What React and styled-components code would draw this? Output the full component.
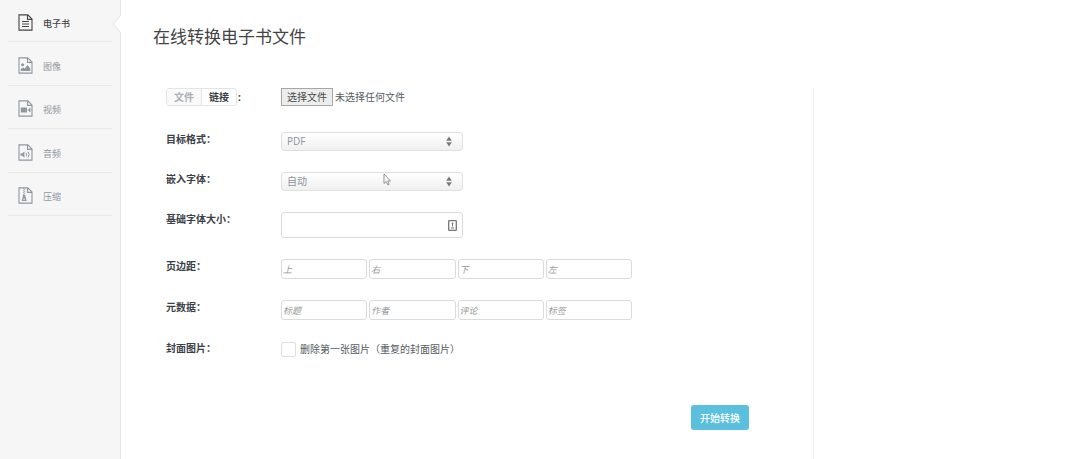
import React, { useRef, useState } from 'react'
import styled, { createGlobalStyle } from 'styled-components'

const GlobalStyle = createGlobalStyle`
    * {
        box-sizing: border-box;
    }
    body {
        margin: 0;
        background-color: #fff;
        color: #555b63;
        font-family: "Open Sans", "Noto Sans CJK SC", sans-serif;
        font-size: 10px;
        line-height: 16px;
    }
    button, input, select {
        margin: 0;
        font: inherit;
        color: inherit;
    }
`

const Page = styled.div`
    display: flex;
    min-height: 100vh;
`

const Sidebar = styled.nav`
    flex: 0 0 121px;
    padding: 0 8px;
    border-right: 1px solid #e6e6e6;
    background-color: #f6f6f6;
`

const Menu = styled.ul`
    margin: 0;
    padding: 0;
    list-style: none;
`

const MenuItem = styled.li`
    position: relative;
    border-bottom: 1px solid #e8e8e8;
`

const MenuLink = styled.a`
    display: flex;
    align-items: center;
    gap: 10px;
    height: 42px;
    padding: 3px 0 0 10px;
    color: ${(props) => (props.$active ? '#444' : '#9097a1')};
    font-size: 9px;
    font-weight: ${(props) => (props.$active ? 500 : 400)};
    text-decoration: none;

    ${MenuItem}:first-child & {
        height: 41px;
    }
    ${MenuItem}:nth-child(even) & {
        height: 43px;
    }
`

const MenuText = styled.span`
    padding-top: 3px;
`

// arrow on the sidebar edge that points at the current item
const Notch = styled.svg`
    position: absolute;
    top: 15px;
    right: -9px;
    width: 9px;
    height: 18px;
`

const Main = styled.main`
    flex: 1;
    display: flex;
    flex-direction: column;
`

const Title = styled.h1`
    margin: 25px 32px 39px;
    color: #444;
    font-size: 17px;
    font-weight: 400;
    line-height: 24px;
`

const Columns = styled.div`
    flex: 1;
    display: grid;
    grid-template-columns: 34fr 13fr;
`

const Form = styled.form`
    display: flex;
    flex-direction: column;
    gap: 21px;
    padding: 0 64px 24px 45px;
    border-right: 1px solid #ececec;
`

const Row = styled.div`
    display: grid;
    grid-template-columns: 115px 1fr;
    align-items: start;
    margin-bottom: ${(props) => (props.$spaced ? '5px' : '0')};
`

const Label = styled.label`
    color: #3b4047;
    font-weight: 700;
    line-height: 14px;
`

const Source = styled.div`
    display: flex;
    align-items: center;
    gap: 1px;
    color: #3b4047;
    font-weight: 700;
`

const Tabs = styled.div`
    display: flex;
    height: 18px;
    border: 1px solid #e2e4e6;
    border-radius: 3px;
    overflow: hidden;
`

const Tab = styled.button`
    padding: 0 7px;
    border: 0;
    border-left: ${(props) => (props.$active ? '0' : '1px solid #e2e4e6')};
    background: ${(props) => (props.$active ? '#fafafa' : '#fff')};
    color: ${(props) => (props.$active ? '#a9b0b8' : '#3b4047')};
    line-height: 16px;
`

const FileField = styled.div`
    display: flex;
    align-items: center;
    gap: 2px;
`

const FileButton = styled.button`
    height: 18px;
    padding: 0 5px;
    border: 1px solid #a6a6a6;
    background-color: #ededed;
    color: #4a4a4a;
    line-height: 16px;
`

const SelectBox = styled.div`
    position: relative;
    max-width: 182px;
    height: 19px;
`

const Select = styled.select`
    display: block;
    width: 100%;
    height: 19px;
    padding: 0 20px 1px 5px;
    border: 1px solid #e0e0e0;
    border-radius: 3px;
    background: linear-gradient(#fff, #f0f0f0);
    color: #8b929c;
    appearance: none;
`

const Arrows = styled.svg`
    position: absolute;
    top: 4px;
    right: 11px;
    width: 6px;
    height: 11px;
    pointer-events: none;
`

const Pointer = styled.svg`
    position: absolute;
    top: 1px;
    right: 72px;
    width: 8px;
    height: 13px;
    pointer-events: none;
`

const InputBox = styled.div`
    position: relative;
    max-width: 182px;
`

const Input = styled.input`
    display: block;
    width: 100%;
    min-width: 0;
    height: ${(props) => (props.$tall ? '26px' : '20px')};
    padding: 0 1px;
    border: 1px solid #d9dbdd;
    border-radius: 3px;
    background-color: #fff;

    &::placeholder {
        color: #999;
        font-size: 9px;
        font-style: italic;
        opacity: 1;
    }
`

const FillMark = styled.svg`
    position: absolute;
    top: 8px;
    right: 6px;
    width: 9px;
    height: 11px;
`

const Group = styled.div`
    display: grid;
    grid-template-columns: repeat(4, 1fr);
    gap: 2px;
    max-width: 351px;
`

const Check = styled.label`
    display: flex;
    align-items: center;
    gap: 4px;
`

const CheckBox = styled.input`
    width: 15px;
    height: 15px;
    border: 1px solid #dcdee0;
    border-radius: 2px;
    background-color: #fff;
    appearance: none;

    &:checked {
        background-color: #5bbfde;
    }
`

const Submit = styled.button`
    align-self: flex-end;
    height: 25px;
    margin-top: 27px;
    padding: 0 9px;
    border: 0;
    border-radius: 3px;
    background-color: #5bbfde;
    color: #fff;
    font-weight: 500;
`

const FileIcon = ({ children }) => (
    <svg width='15' height='17' viewBox='0 0 15 17' fill='none' stroke='currentColor' strokeWidth='1.1' aria-hidden='true'>
        <path d='M1 .9h8.8l4.2 4.2v11H1z' />
        <path d='M9.5 1v4.4H14' />
        {children}
    </svg>
)

const glyphs = {
    book: <path d='M4 7.5h7M4 10h7M4 12.5h7' />,
    image: (
        <g fill='currentColor' stroke='none'>
            <circle cx='4.6' cy='7.8' r='1.5' />
            <path d='M2.8 14v-2l2.2-1.5 1.8 1L9.5 8l2.8 3.5V14z' />
        </g>
    ),
    video: (
        <g fill='currentColor' stroke='none'>
            <rect x='2.8' y='7.5' width='6.2' height='5' />
            <path d='M9.6 10l2.9-2.5v5z' />
        </g>
    ),
    audio: (
        <g>
            <path d='M2.5 9.5H4l2.4-2v6L4 11.7H2.5z' fill='currentColor' stroke='none' />
            <path d='M8 8.7q1.3 1.8 0 3.6M10 7.6q2.3 2.9 0 5.8' strokeWidth='1' />
        </g>
    ),
    archive: (
        <g>
            <path d='M5.6 1.2v7' strokeWidth='1' strokeDasharray='1 1' />
            <path d='M6.6 2.2v6' strokeWidth='1' strokeDasharray='1 1' />
            <path d='M5.2 8h1.9l1.5 6H3.7z' fill='currentColor' stroke='none' />
            <path d='M5.2 12.2h1.9' stroke='#f6f6f6' strokeWidth='1' />
        </g>
    )
}

const menu = [
    { icon: 'book', text: '电子书' },
    { icon: 'image', text: '图像' },
    { icon: 'video', text: '视频' },
    { icon: 'audio', text: '音频' },
    { icon: 'archive', text: '压缩' }
]

const margins = ['上', '右', '下', '左']
const metadata = ['标题', '作者', '评论', '标签']

const SelectField = ({ id, options, children }) => (
    <SelectBox>
        <Select id={id}>
            {options.map((option) => <option key={option}>{option}</option>)}
        </Select>
        <Arrows viewBox='0 0 6 11' fill='#777' aria-hidden='true'>
            <path d='M3 .5l2.8 4.3H.2zM3 10.5L.2 6.2h5.6z' />
        </Arrows>
        {children}
    </SelectBox>
)

const FilePicker = () => {
    const input = useRef(null)
    const [name, setName] = useState('')
    return (
        <FileField>
            <input
                ref={input}
                type='file'
                hidden
                aria-label='选择文件'
                onChange={(e) => setName(e.target.files[0] ? e.target.files[0].name : '')}
            />
            <FileButton type='button' onClick={() => input.current.click()}>选择文件</FileButton>
            <span>{name || '未选择任何文件'}</span>
        </FileField>
    )
}

const InputGroup = ({ id, names }) => (
    <Group>
        {names.map((name, i) => (
            <Input key={name} id={i === 0 ? id : undefined} aria-label={name} placeholder={name} />
        ))}
    </Group>
)

const App = () => (
    <Page>
        <GlobalStyle />
        <Sidebar>
            <Menu>
                {menu.map((item, i) => (
                    <MenuItem key={item.icon}>
                        <MenuLink href={`#${item.icon}`} $active={i === 0}>
                            <FileIcon>{glyphs[item.icon]}</FileIcon>
                            <MenuText>{item.text}</MenuText>
                        </MenuLink>
                        {i === 0 && (
                            <Notch viewBox='0 0 9 18' aria-hidden='true'>
                                <path d='M9 0L1 9l8 9z' fill='#fff' />
                                <path d='M8.5 .5L1 9l7.5 8.5' fill='none' stroke='#e2e2e2' />
                            </Notch>
                        )}
                    </MenuItem>
                ))}
            </Menu>
        </Sidebar>
        <Main>
            <Title>在线转换电子书文件</Title>
            <Columns>
                <Form onSubmit={(e) => e.preventDefault()}>
                    <Row $spaced>
                        <Source>
                            <Tabs>
                                <Tab type='button' $active>文件</Tab>
                                <Tab type='button'>链接</Tab>
                            </Tabs>
                            :
                        </Source>
                        <FilePicker />
                    </Row>
                    <Row>
                        <Label htmlFor='format'>目标格式：</Label>
                        <SelectField id='format' options={['PDF', 'EPUB', 'MOBI']} />
                    </Row>
                    <Row>
                        <Label htmlFor='font'>嵌入字体：</Label>
                        <SelectField id='font' options={['自动']}>
                            <Pointer viewBox='0 0 8 13' aria-hidden='true'>
                                <path d='M1 1v9.5l2.2-2 1.6 3.4 1.4-.7-1.5-3.2h2.8z' fill='#fff' stroke='#777' strokeWidth='.8' />
                            </Pointer>
                        </SelectField>
                    </Row>
                    <Row>
                        <Label htmlFor='size'>基础字体大小：</Label>
                        <InputBox>
                            <Input id='size' $tall />
                            <FillMark viewBox='0 0 9 11' fill='none' stroke='#777' aria-hidden='true'>
                                <rect x='.7' y='.7' width='7.6' height='9.6' rx='.6' strokeWidth='1.3' />
                                <circle cx='4.5' cy='3.4' r='.9' fill='#777' stroke='none' />
                                <path d='M4.5 4v2.5M2.8 8h3.4' />
                            </FillMark>
                        </InputBox>
                    </Row>
                    <Row>
                        <Label htmlFor='margin'>页边距：</Label>
                        <InputGroup id='margin' names={margins} />
                    </Row>
                    <Row>
                        <Label htmlFor='meta'>元数据：</Label>
                        <InputGroup id='meta' names={metadata} />
                    </Row>
                    <Row>
                        <Label htmlFor='cover'>封面图片：</Label>
                        <Check>
                            <CheckBox id='cover' type='checkbox' />
                            删除第一张图片（重复的封面图片）
                        </Check>
                    </Row>
                    <Submit type='submit'>开始转换</Submit>
                </Form>
            </Columns>
        </Main>
    </Page>
)

export default App
